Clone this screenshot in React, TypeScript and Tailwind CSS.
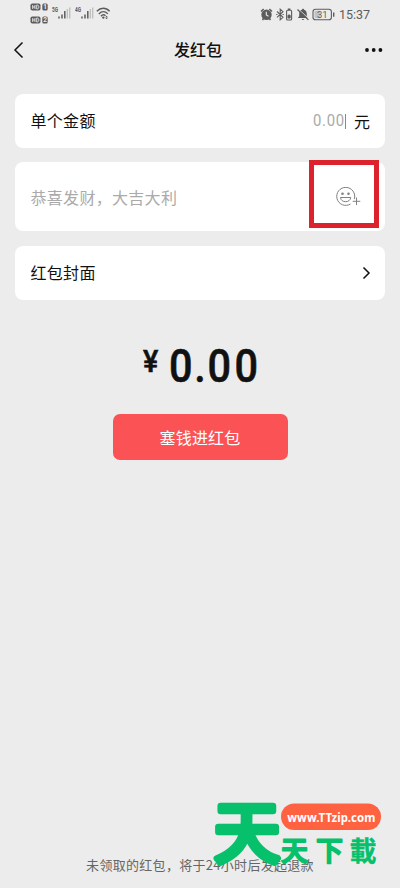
import type { ReactNode } from "react";

function HdBadge({ n }: { n: string }) {
  return (
    <svg width="18" height="8" viewBox="0 0 18 8">
      <rect x="0.5" y="0.5" width="10" height="7" rx="1.8" fill="#5c5c5c" />
      <path d="M2.7 2v4M5 2v4M2.7 4H5M6.7 2v4h.6c2 0 2-4 0-4z" stroke="#ececec" strokeWidth="0.9" fill="none" />
      <rect x="12.3" y="0.5" width="5.4" height="7" rx="1.5" fill="#5c5c5c" />
      <text x="15" y="6.3" fontSize="6.5" fontWeight="700" textAnchor="middle" fill="#ececec" fontFamily="Roboto, sans-serif">
        {n}
      </text>
    </svg>
  );
}

function Signal({ label }: { label: string }) {
  return (
    <svg width="20" height="14" viewBox="0 0 20 14">
      <text x="0" y="6" fontSize="6.3" fontWeight="700" textLength="6" lengthAdjust="spacingAndGlyphs" fill="#5c5c5c" fontFamily="Roboto, sans-serif">
        {label}
      </text>
      <path d="M7 10.5v2M10 8.5v4M12.800 5v7.500" stroke="#5c5c5c" strokeWidth="1.500" />
      <path d="M15.300 3v9.500M17.700 1.500v11" stroke="#bdbdbd" strokeWidth="1.300" />
    </svg>
  );
}

function StatusBar() {
  return (
    <div className="flex h-7 items-start justify-between pl-[29.500px] pr-[30px] text-[#5c5c5c]">
      <div className="flex items-start">
        <div className="flex flex-col gap-[4.500px] pt-[3.300px]">
          <HdBadge n="1" />
          <HdBadge n="2" />
        </div>
        <div className="ml-[4.500px] flex gap-[2.500px] pt-[6px]">
          <Signal label="5G" />
          <Signal label="4G" />
        </div>
        <svg className="ml-[1px] mt-[7px]" width="15" height="13" viewBox="0 0 15 13" fill="none" stroke="#5c5c5c" strokeWidth="1.400">
          <path d="M.8 4.300C4.700.2 9.900.2 13.600 4.300M2.800 6.900c2.800-3 6.400-3 9 0M4.900 9.200c1.500-1.600 3.200-1.700 4.600-.5" />
          <circle cx="7.300" cy="10.600" r="1.200" fill="#5c5c5c" stroke="none" />
          <path d="m10.600 8.700-1.300 1.500h2.600zM10.600 12.200l1.300-1.400H9.300z" fill="#5c5c5c" stroke="none" />
        </svg>
      </div>
      <div className="flex items-center pt-[7px]">
        <svg width="13" height="13" viewBox="0 0 13 13">
          <path d="M1 3.500 3.600 1M9.400 1 12 3.500M2.500 12l1-1.500M10.500 12l-1-1.500" stroke="#5c5c5c" strokeWidth="1.500" />
          <circle cx="6.500" cy="6.700" r="5.200" fill="#5c5c5c" />
          <path d="M6.300 3.800v3.200l2.200 1.200" fill="none" stroke="#ececec" strokeWidth="1.100" />
        </svg>
        <svg className="ml-[3px]" width="17" height="13" viewBox="0 0 17 13" fill="none" stroke="#5c5c5c" strokeWidth="1.100">
          <path d="m1 3.500 6 5.800-2.800 2.500V1.200L7 3.700 1 9.300M.2 6.500h1.300M6.500 6.500h1.300" />
          <rect x="10.600" y="2.200" width="5" height="9.800" rx="1" />
          <path d="M11.800 1.200h2.600M13.100 6.500v4" strokeWidth="1.600" />
          <path d="M11.500 8.700h3.200" strokeWidth="3" />
        </svg>
        <svg className="ml-[4px]" width="12" height="13" viewBox="0 0 12 13">
          <path d="M6 .8c.7 0 1 .4 1 1 2 .6 2.800 2.100 2.800 4v2.400l1.400 1.900H.8l1.400-1.900V5.800c0-1.900.8-3.400 2.800-4 0-.6.300-1 1-1zM4.700 10.900h2.600c-.3 1.300-2.300 1.300-2.600 0z" fill="#5c5c5c" />
          <path d="m1.200 .9 10.800 10.200" stroke="#ececec" strokeWidth="1" />
          <path d="m.5 1.500 10.900 10.400" stroke="#5c5c5c" strokeWidth="1.200" />
        </svg>
        <svg className="ml-[3px]" width="23" height="13" viewBox="0 0 23 13">
          <rect x="1" y="1.200" width="18.400" height="10.600" rx="2.600" fill="none" stroke="#5c5c5c" strokeWidth="1.100" />
          <rect x="2.500" y="2.800" width="5.500" height="7.400" rx="1" fill="#c2c2c2" />
          <text x="10.300" y="9.900" fontSize="9.500" textAnchor="middle" fill="#5c5c5c" fontFamily="Roboto, sans-serif">
            31
          </text>
          <path d="M21.700 4.500v4.200" stroke="#5c5c5c" strokeWidth="1.400" />
        </svg>
        <span className="ml-[4px] mt-px w-[31px] whitespace-nowrap font-[Roboto,sans-serif] text-[12.500px] leading-[13px]">15:37</span>
      </div>
    </div>
  );
}

function Card({ className, children }: { className: string; children: ReactNode }) {
  return <div className={`mx-[15px] flex justify-between rounded-[8px] bg-white pl-[15.500px] ${className}`}>{children}</div>;
}

function EmojiPlus() {
  return (
    <svg width="26" height="20" viewBox="0 0 26 20" fill="none" stroke="#808080" strokeWidth="1">
      <path d="M18.300 12.100A9 9 0 1 0 14.500 17" />
      <circle cx="6.500" cy="6.700" r="1.300" fill="#808080" stroke="none" />
      <circle cx="12.500" cy="6.700" r="1.300" fill="#808080" stroke="none" />
      <path d="M4.500 10.500h10.200c-.3 5.600-9.900 5.600-10.200 0z" />
      <path d="M20.500 10.500v7.500M16.700 14.300h7.600" />
    </svg>
  );
}

function Watermark() {
  return (
    <svg className="absolute left-[205px] top-[790px] overflow-visible" width="190" height="90" viewBox="0 0 190 90">
      <g fill="#07c06b" stroke="#07c06b" strokeLinejoin="round" fontFamily="'Noto Sans CJK SC', sans-serif">
        <text x="9" y="67" fontSize="66" fontWeight="400" strokeWidth="6.500">
          天
        </text>
        <text x="76" y="71" fontSize="27" fontWeight="500" strokeWidth="1.800">
          天
        </text>
        <text x="111" y="71" fontSize="27" fontWeight="500" strokeWidth="1.800">
          下
        </text>
        <text x="144.500" y="71" fontSize="27" fontWeight="700" strokeWidth="0.300">
          載
        </text>
      </g>
      <rect x="76" y="13.500" width="100" height="26.500" rx="13.200" fill="#ff6240" />
      <text x="82.300" y="32" fontSize="12.500" fontWeight="700" textLength="88" lengthAdjust="spacingAndGlyphs" fill="#fff" fontFamily="'Noto Sans', sans-serif">
        www.TTzip.com
      </text>
    </svg>
  );
}

export default function App() {
  return (
    <div lang="zh-CN" className="relative flex h-[888px] w-[400px] flex-col overflow-hidden bg-[#ececec] font-['Noto_Sans_CJK_SC',sans-serif] text-[16px] text-[#111]">
      <StatusBar />
      <header className="flex h-11 items-center justify-between pl-[13px] pr-[17px]">
        <svg width="12" height="18" viewBox="0 0 12 18" fill="none" stroke="#111" strokeWidth="1.500">
          <path d="M9.500 1.500 2 9l7.500 7.500" />
        </svg>
        <h1 className="mb-[2px] ml-[7px] font-medium">发红包</h1>
        <svg width="19" height="6" viewBox="0 0 19 6" fill="#111">
          <circle cx="3" cy="3" r="1.900" />
          <circle cx="9.700" cy="3" r="1.900" />
          <circle cx="16.400" cy="3" r="1.900" />
        </svg>
      </header>

      <Card className="mt-[22px] h-[54px] items-center pr-[15px]">
        <span className="mb-[2px] tracking-[0.300px]">单个金额</span>
        <div className="mb-px flex items-center">
          <span className="mt-[2px] w-[32px] origin-left scale-x-90 whitespace-nowrap font-[Roboto,sans-serif] text-[16.500px] tracking-[0.800px] text-[#aaa]">0.00</span>
          <i className="mt-px h-[15px] w-px bg-[#888]" />
          <span className="ml-[7.500px]">元</span>
        </div>
      </Card>
      <Card className="mt-[14px] h-[69px]">
        <span className="self-center tracking-[0.300px] text-[#aaa]">恭喜发财，大吉大利</span>
        <div className="-mt-[2px] mr-[6px] flex h-[68px] w-[70px] items-center justify-end border-[5px] border-[#dc232d] pr-[12px] pt-[5px]">
          <EmojiPlus />
        </div>
      </Card>
      <Card className="mt-[15px] h-[54px] items-center pr-[14px]">
        <span className="mb-[2px] tracking-[0.300px]">红包封面</span>
        <svg width="9" height="14" viewBox="0 0 9 14" fill="none" stroke="#111" strokeWidth="1.500">
          <path d="m1.500 1.500 5.500 5.500-5.500 5.500" />
        </svg>
      </Card>

      <div className="mt-[40px] flex h-[50px] items-start pl-[143px] font-[Roboto,sans-serif] font-medium [-webkit-text-stroke:0.600px_#111]">
        <span className="mt-[4px] w-[18px] origin-left scale-x-90 text-[32px] leading-[34px]">¥</span>
        <span className="ml-[8px] origin-left scale-x-90 text-[46px] leading-[52px] tracking-[1.900px]">
          0.<span className="tracking-[3.900px]">00</span>
        </span>
      </div>
      <button className="mx-auto mt-[24px] h-[46px] w-[175px] rounded-[7px] bg-[#fb5355] pb-px tracking-[0.200px] text-white">塞钱进红包</button>

      <footer className="mb-[13px] mt-auto whitespace-nowrap text-center text-[13px] leading-[20px] tracking-[0.300px] text-[#666]">
        未领取的红包，将于24小时后发起退款
      </footer>
      <Watermark />
    </div>
  );
}
